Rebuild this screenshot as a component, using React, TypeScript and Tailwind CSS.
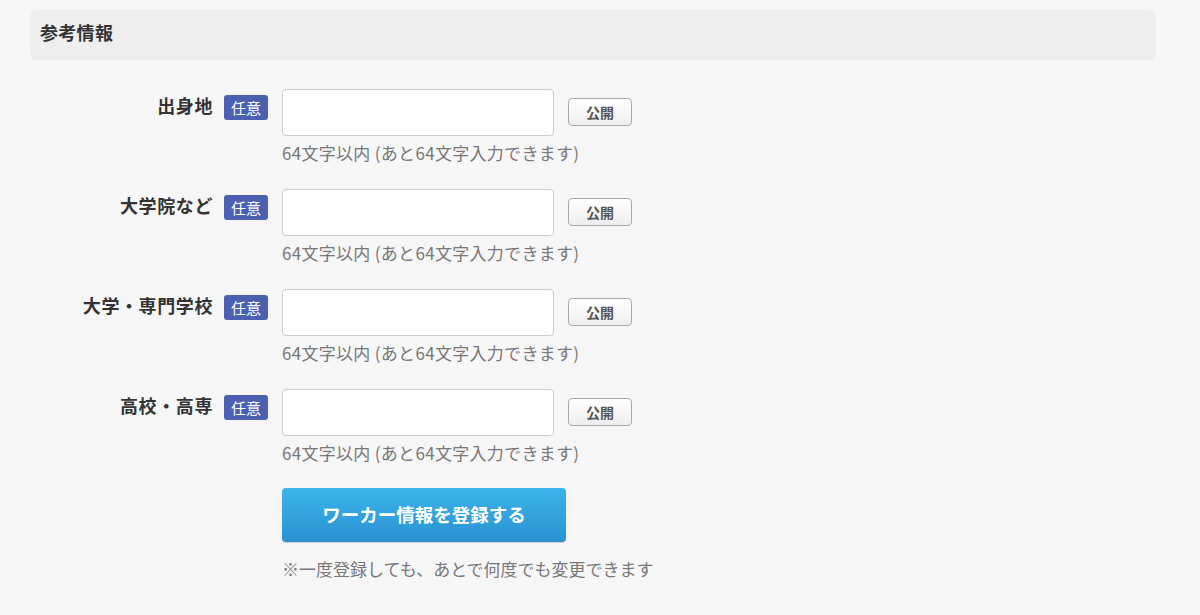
const jp = { fontFamily: '"Noto Sans CJK JP", "Noto Sans", sans-serif' }

const fields = ["出身地", "大学院など", "大学・専門学校", "高校・高専"]

function FieldRow({ label }: { label: string }) {
    return (
        <div className="flex items-start">
            <div className="w-[213px] shrink-0 pt-[4px] text-right text-[18px] font-bold leading-[25px] tracking-[0.6px] text-[#333]">
                {label}
            </div>
            <span className="ml-[11px] mt-[6px] flex h-[25px] w-[44px] shrink-0 items-center justify-center rounded-[3px] bg-[#4b60b0] text-[15px] leading-none text-white">
                任意
            </span>
            <div className="ml-[14px] flex w-[272px] shrink-0 flex-col">
                <input
                    type="text"
                    className="h-[47px] w-full rounded-[4px] border border-[#cccccc] bg-white px-3 text-[16px] outline-none"
                />
                <p className="mt-[6px] whitespace-nowrap text-[17px] leading-[22px] tracking-[0.3px] text-[#777]">
                    64文字以内 (あと64文字入力できます)
                </p>
            </div>
            <button className="ml-[14px] mt-[9px] flex h-[28px] w-[64px] items-center justify-center rounded-[4px] border border-[#a8a8a8] bg-gradient-to-b from-white to-[#eeeeee] text-[14px] font-bold text-[#555]">
                公開
            </button>
        </div>
    )
}

export default function App() {
    return (
        <div className="min-h-[615px] w-full bg-[#f6f6f6] pt-[10px]" style={jp}>
            {/* Section heading */}
            <div className="ml-[30px] h-[50px] w-[1126px] rounded-[7px] bg-[#eeeeee] px-[10px] pt-[11px]">
                <h2 className="text-[18px] font-bold leading-[22px] tracking-[0.3px] text-[#333]">参考情報</h2>
            </div>

            {/* Fields */}
            <div className="mt-[29px] flex flex-col gap-[25px]">
                {fields.map((f) => (
                    <FieldRow key={f} label={f} />
                ))}
            </div>

            {/* Submit */}
            <div className="ml-[282px] mt-[24px] flex flex-col items-start">
                <button className="flex h-[54px] w-[284px] items-center justify-center rounded-[4px] bg-gradient-to-b from-[#3cb5ea] to-[#2a91d1] text-[18.5px] font-bold text-white shadow-[0_1px_1px_rgba(0,0,0,0.15)]">
                    ワーカー情報を登録する
                </button>
                <p className="mt-[16px] whitespace-nowrap text-[17px] leading-[22px] text-[#777]">
                    ※一度登録しても、あとで何度でも変更できます
                </p>
            </div>
        </div>
    )
}
